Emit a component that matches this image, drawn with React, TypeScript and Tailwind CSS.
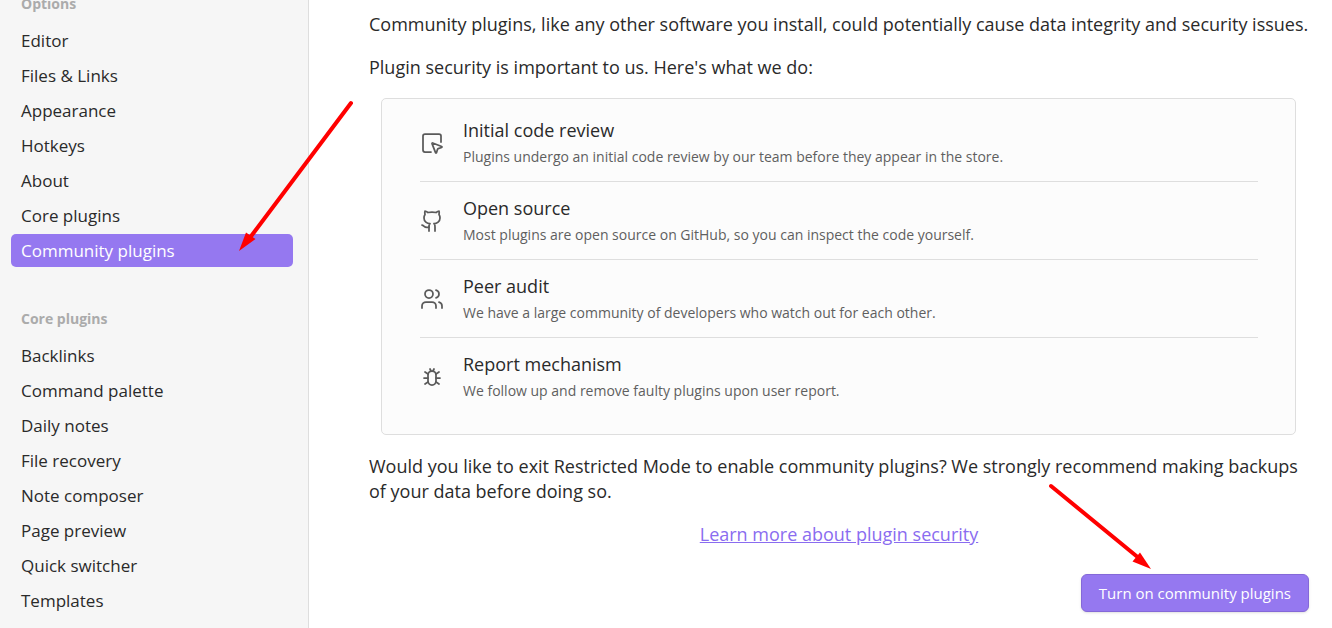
import type { ReactNode } from "react";
import { Github, SquareMousePointer, Users } from "lucide-react";

const optionTabs = ["Editor", "Files & Links", "Appearance", "Hotkeys", "About", "Core plugins", "Community plugins"];

const corePluginTabs = [
  "Backlinks",
  "Command palette",
  "Daily notes",
  "File recovery",
  "Note composer",
  "Page preview",
  "Quick switcher",
  "Templates",
];

function BugIcon() {
  return (
    <svg
      aria-hidden="true"
      viewBox="0 0 24 24"
      fill="none"
      stroke="currentColor"
      strokeWidth="1.75"
      strokeLinecap="round"
      strokeLinejoin="round"
      className="size-6"
    >
      <rect width="8" height="14" x="8" y="6" rx="4" />
      <path d="m19 7-3 2M5 7l3 2M19 19l-3-2M5 19l3-2M20 13h-4M4 13h4M10 4l1 2M14 4l-1 2" />
    </svg>
  );
}

const safeguards: { icon: ReactNode; title: string; text: string }[] = [
  {
    icon: <SquareMousePointer aria-hidden="true" className="size-6" strokeWidth={1.75} />,
    title: "Initial code review",
    text: "Plugins undergo an initial code review by our team before they appear in the store.",
  },
  {
    icon: <Github aria-hidden="true" className="size-6" strokeWidth={1.75} />,
    title: "Open source",
    text: "Most plugins are open source on GitHub, so you can inspect the code yourself.",
  },
  {
    icon: <Users aria-hidden="true" className="size-6" strokeWidth={1.75} />,
    title: "Peer audit",
    text: "We have a large community of developers who watch out for each other.",
  },
  {
    icon: <BugIcon />,
    title: "Report mechanism",
    text: "We follow up and remove faulty plugins upon user report.",
  },
];

function TabGroup({ title, tabs, active }: { title: string; tabs: string[]; active?: string }) {
  return (
    <section>
      <h2 className="px-[10px] text-sm leading-6 font-bold text-[#ababab]">{title}</h2>
      <ul className="mt-2 flex flex-col gap-[2px]">
        {tabs.map((tab) => (
          <li key={tab}>
            <button
              type="button"
              className={
                tab === active
                  ? "block h-[33px] w-full rounded-[5px] bg-[#9578f0] px-[10px] text-left text-[17px] text-white"
                  : "block h-[33px] w-full rounded-[5px] px-[10px] text-left text-[17px]"
              }
            >
              {tab}
            </button>
          </li>
        ))}
      </ul>
    </section>
  );
}

export default function App() {
  return (
    <div className="flex h-screen overflow-hidden bg-white font-['Open_Sans','Noto_Sans',sans-serif] text-[#2a2a2a]">
      <nav
        aria-label="Settings"
        className="relative w-[309px] shrink-0 border-r border-[#dedede] bg-[#f6f6f6] pr-[15px] pl-[11px]"
      >
        <div className="-mt-2 flex flex-col gap-10">
          <TabGroup title="Options" tabs={optionTabs} active="Community plugins" />
          <TabGroup title="Core plugins" tabs={corePluginTabs} />
        </div>
        <svg
          aria-hidden="true"
          viewBox="0 0 120 156"
          className="pointer-events-none absolute top-[98px] left-[236px] h-[156px] w-[120px]"
        >
          <path d="M115 5 13 141" stroke="#ff0000" strokeWidth="4" strokeLinecap="round" />
          <path d="M3 153 10 134.500 15 138 19.500 141Z" fill="#ff0000" />
        </svg>
      </nav>

      <main className="min-w-0 flex-1 pt-3 pr-[23px] pl-[60px] text-lg leading-[25px]">
        <p>
          Community plugins, like any other software you install, could potentially cause data integrity and security
          issues.
        </p>
        <p className="mt-[18px]">Plugin security is important to us. Here's what we do:</p>

        <ul className="mt-[18px] mr-[13px] ml-3 rounded-[5px] border border-[#dedede] bg-[#fcfcfc] pt-[5px] pr-[37px] pb-[18px] pl-[38px]">
          {safeguards.map(({ icon, title, text }) => (
            <li key={title} className="flex h-[78px] items-center gap-[19px] border-b border-[#dedede] last:border-b-0">
              <span className="shrink-0 text-[#5a5a5a]">{icon}</span>
              <div>
                <h3>{title}</h3>
                <p className="mt-[3px] text-sm leading-[22px] text-[#5f5f5f]">{text}</p>
              </div>
            </li>
          ))}
        </ul>

        <p className="mt-[19px]">
          Would you like to exit Restricted Mode to enable community plugins? We strongly recommend making backups of
          your data before doing so.
        </p>
        <p className="mt-[18px] text-center">
          <a href="#plugin-security" className="text-[#8a6cf0] underline">
            Learn more about plugin security
          </a>
        </p>

        <div className="relative mt-[27px] flex justify-end">
          <button
            type="button"
            className="h-[38px] rounded-[6px] border border-[#8468d8] bg-[#9578f0] px-[17px] text-[15px] text-white shadow-sm"
          >
            Turn on community plugins
          </button>
          <svg
            aria-hidden="true"
            viewBox="0 0 108 90"
            className="pointer-events-none absolute -top-[92px] right-[154px] h-[90px] w-[108px]"
          >
            <path d="M4 4 93 77" stroke="#ff0000" strokeWidth="4" strokeLinecap="round" />
            <path d="M104 87 93 70.500 85.500 79.500Z" fill="#ff0000" />
          </svg>
        </div>
      </main>
    </div>
  );
}
